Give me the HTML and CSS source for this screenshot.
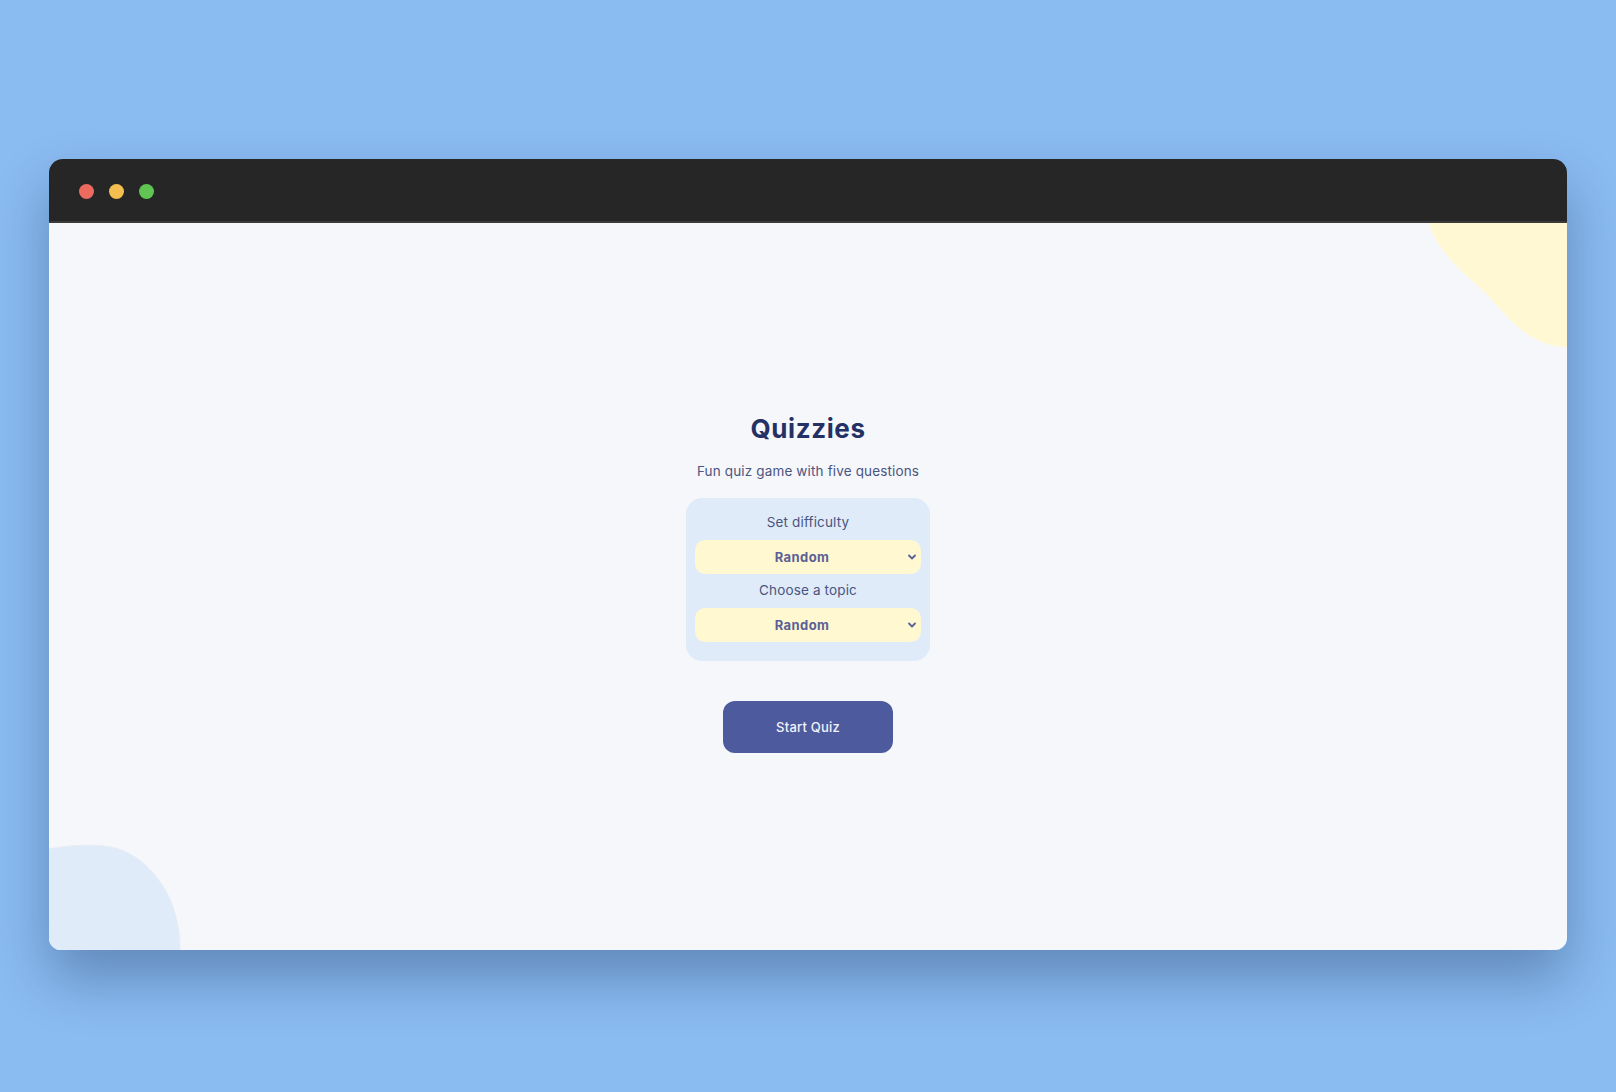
FILE: index.html
```html
<!DOCTYPE html>
<html lang="en">
<head>
<meta charset="utf-8">
<title>Quizzies</title>
<link rel="stylesheet" href="styles.css">
</head>
<body>
<div class="window">
  <div class="titlebar">
    <span class="dot dot-red"></span>
    <span class="dot dot-yellow"></span>
    <span class="dot dot-green"></span>
  </div>
  <main class="content">
    <svg class="blob blob-tr" width="140" height="126" viewBox="0 0 140 126" aria-hidden="true">
      <path d="M2 0 C8 22 25 40 50 62 C72 82 90 110 115 119 C125 123 133 124 140 124 V0 Z" fill="#fff8d2"/>
    </svg>
    <svg class="blob blob-bl" width="132" height="106" viewBox="0 0 132 106" aria-hidden="true">
      <path d="M0 5 C15 2 35 0 55 2 C85 5 105 26 118 49 C127 67 131 86 131 106 L0 106 Z" fill="#dfebf8" stroke="#e6ecf4" stroke-width="1"/>
    </svg>
    <div class="stack">
      <h1 class="title">Quizzies</h1>
      <p class="subtitle">Fun quiz game with five questions</p>
      <div class="panel">
        <label class="label" for="difficulty">Set difficulty</label>
        <div class="select-wrap">
          <select id="difficulty" class="select">
            <option>Random</option>
            <option>Easy</option>
            <option>Medium</option>
            <option>Hard</option>
          </select>
          <svg class="chev" width="8" height="6" viewBox="0 0 8 6" aria-hidden="true"><path d="M1 1.5 L4 4.5 L7 1.5" fill="none" stroke="#5a6196" stroke-width="1.8" stroke-linecap="round" stroke-linejoin="round"/></svg>
        </div>
        <label class="label label-2" for="topic">Choose a topic</label>
        <div class="select-wrap">
          <select id="topic" class="select">
            <option>Random</option>
            <option>Science</option>
            <option>History</option>
          </select>
          <svg class="chev" width="8" height="6" viewBox="0 0 8 6" aria-hidden="true"><path d="M1 1.5 L4 4.5 L7 1.5" fill="none" stroke="#5a6196" stroke-width="1.8" stroke-linecap="round" stroke-linejoin="round"/></svg>
        </div>
      </div>
      <button class="start" type="button">Start Quiz</button>
    </div>
  </main>
</div>
</body>
</html>
```
FILE: styles.css
```css
* { box-sizing: border-box; }
html, body { margin: 0; padding: 0; }
body {
  background: #8abbf1;
  width: 1616px;
  height: 1092px;
  padding: 159px 49px 0 49px;
  font-family: Inter, "Open Sans", sans-serif;
  overflow: hidden;
}
.window {
  width: 1518px;
  height: 791px;
  border-radius: 14px 14px 12px 12px;
  display: flex;
  flex-direction: column;
  box-shadow: 0 28px 55px rgba(10, 30, 70, 0.32);
  overflow: hidden;
}
.titlebar {
  height: 64px;
  flex: none;
  background: #262626;
  border-bottom: 2px solid #3b3b3b;
  display: flex;
  align-items: center;
  gap: 15px;
  padding: 2px 0 0 30px;
}
.dot { width: 15px; height: 15px; border-radius: 50%; display: block; }
.dot-red { background: #ec6a5e; }
.dot-yellow { background: #f4bf4f; }
.dot-green { background: #61c554; }
.content {
  flex: 1;
  position: relative;
  background: #f6f7fb;
  display: flex;
  align-items: center;
  justify-content: center;
}
.blob { position: absolute; display: block; }
.blob-tr { top: 0; right: 0; }
.blob-bl { left: 0; bottom: 0; }
.stack {
  position: relative;
  display: flex;
  flex-direction: column;
  align-items: center;
  margin-top: -9px;
}
.title {
  margin: 0;
  font-size: 26px;
  font-weight: 700;
  letter-spacing: 0.6px;
  color: #243165;
  line-height: 34px;
}
.subtitle {
  margin: 15px 0 0;
  font-size: 13.5px;
  color: #4a5580;
  line-height: 20px;
  letter-spacing: 0.15px;
}
.panel {
  margin-top: 17px;
  width: 244px;
  background: #dfebf9;
  border-radius: 16px;
  padding: 14px 9px 19px;
  display: flex;
  flex-direction: column;
  align-items: stretch;
}
.label {
  text-align: center;
  font-size: 13.5px;
  color: #4a5580;
  line-height: 20px;
  letter-spacing: 0.15px;
  margin-bottom: 8px;
}
.label-2 { margin-top: 6px; }
.select-wrap { position: relative; }
.select {
  -webkit-appearance: none;
  appearance: none;
  width: 100%;
  height: 34px;
  border: none;
  border-radius: 10px;
  background: #fff8d0;
  font-family: inherit;
  font-size: 13px;
  font-weight: 700;
  color: #5a6196;
  letter-spacing: 0.4px;
  text-align: center;
  text-align-last: center;
  padding: 0 22px 0 10px;
  outline: none;
}
.chev { position: absolute; right: 5px; top: 14px; pointer-events: none; }
.start {
  margin-top: 40px;
  width: 170px;
  height: 52px;
  border: none;
  border-radius: 12px;
  background: #4e5a9e;
  color: #f2f3fb;
  font-family: inherit;
  font-size: 13px;
  font-weight: 500;
  letter-spacing: 0.2px;
}
```
